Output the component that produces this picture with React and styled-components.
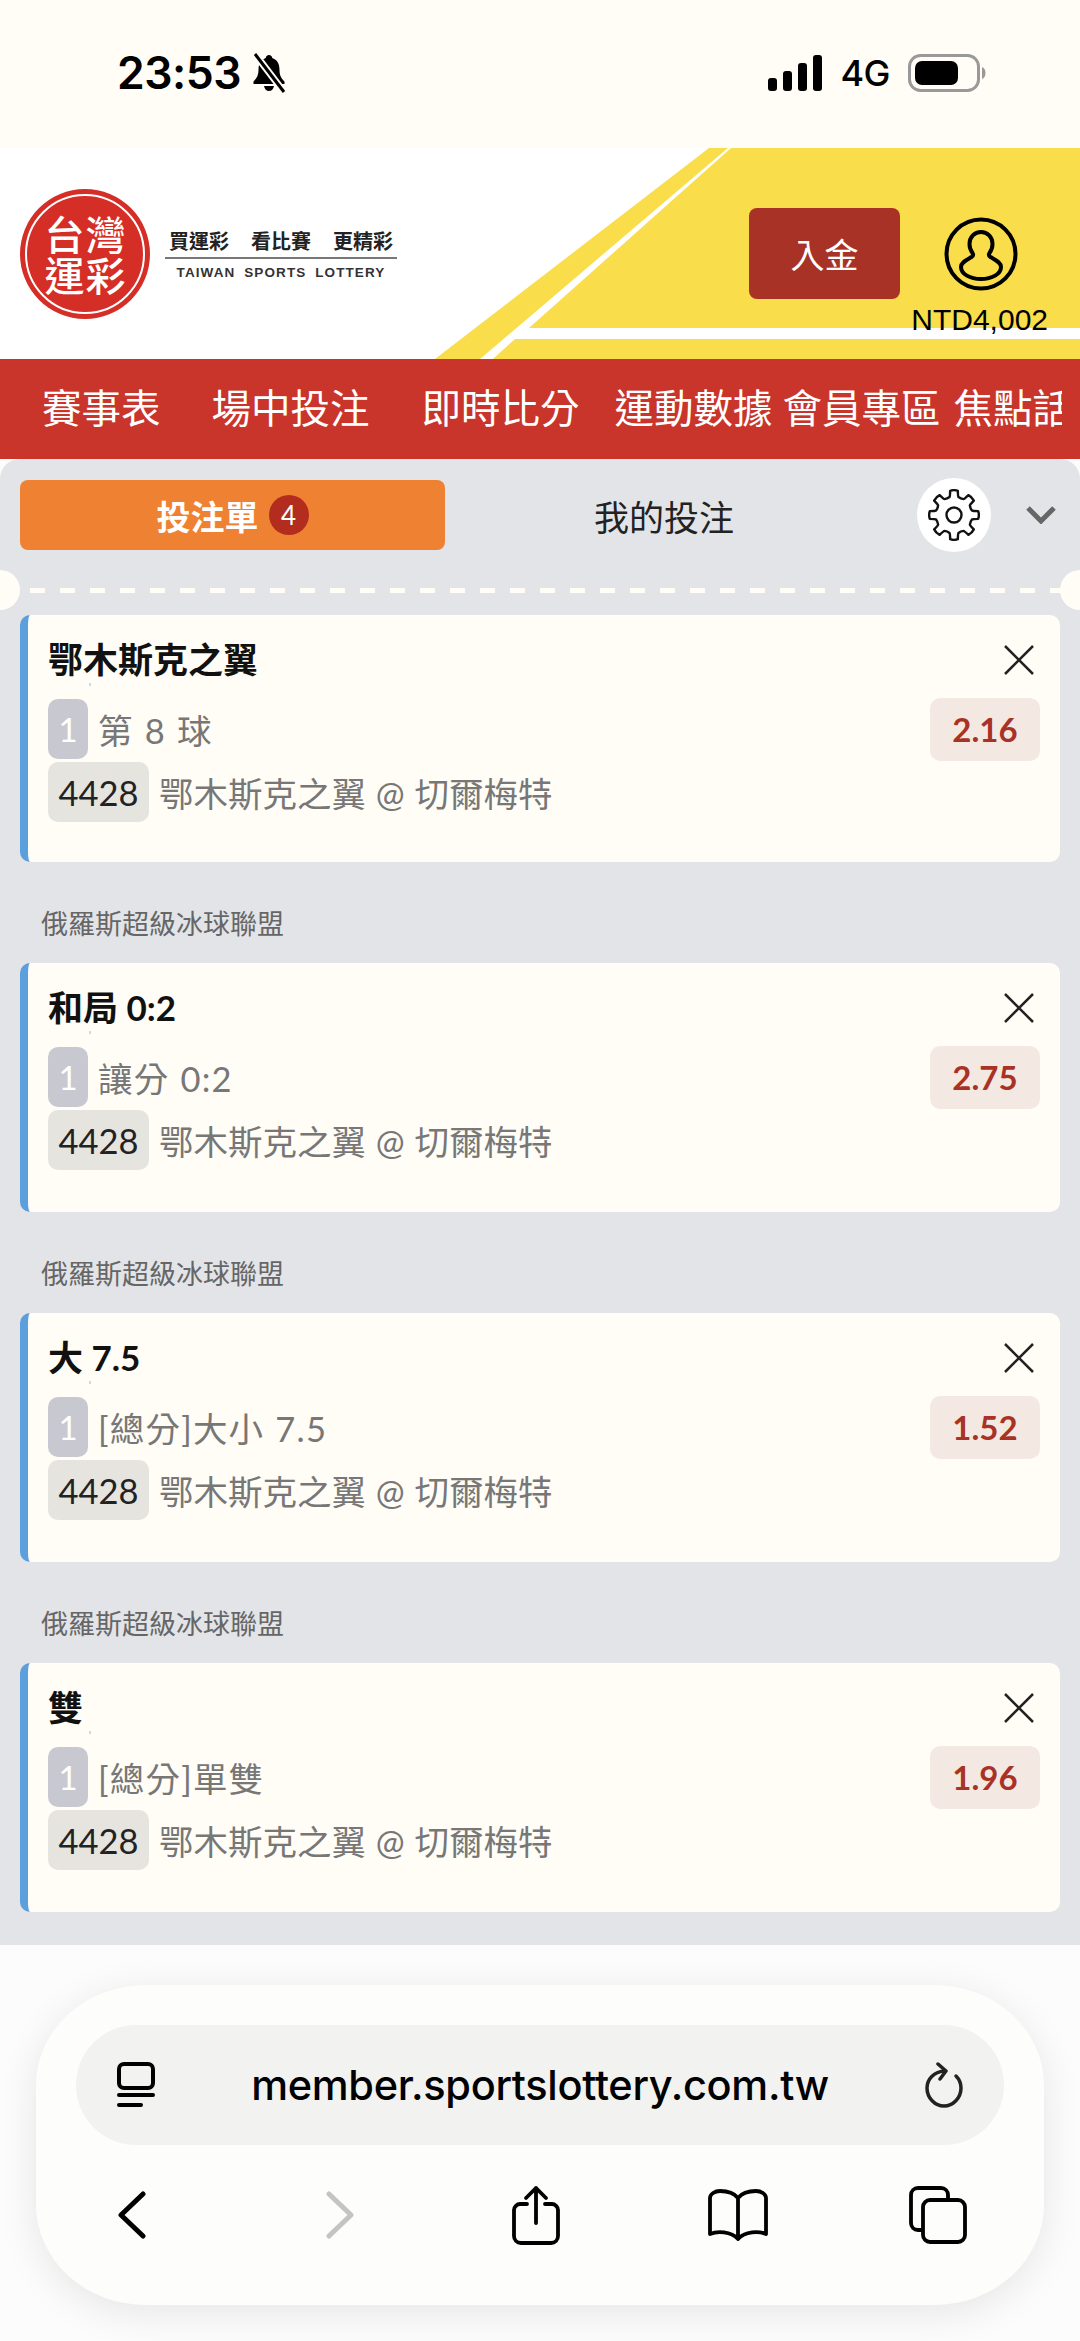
import React from 'react';
import styled, { createGlobalStyle } from 'styled-components';

const Global = createGlobalStyle`
  html, body { margin: 0; padding: 0; background: #fcfcfc; }
  * { box-sizing: border-box; }
  body { font-family: Lato, "Noto Sans CJK TC", sans-serif; }
`;

const Page = styled.div`
  width: 1080px;
  height: 2341px;
  overflow: hidden;
  background: #fcfcfc;
`;

/* status bar */
const StatusBar = styled.div`
  height: 148px;
  background: #fffdf6;
  display: flex;
  align-items: center;
  justify-content: space-between;
  padding: 0 94px 0 117px;
`;
const StatusSide = styled.div`
  display: flex;
  align-items: center;
  gap: ${p => p.$gap}px;
  height: 50px;
  margin-top: -2px;
`;
const Time = styled.span`
  font: 600 44.5px Inter, sans-serif;
  color: #000;
  letter-spacing: -0.5px;
`;
const Net = styled.span`
  font: 500 36px Inter, sans-serif;
  letter-spacing: -0.5px;
  color: #000;
`;

/* header */
const Header = styled.div`
  position: relative;
  height: 211px;
  background: #fff;
  display: flex;
  align-items: center;
  padding: 0 20px;
`;
const HeaderArt = styled.svg`
  position: absolute;
  left: 0;
  top: 0;
`;
const Logo = styled.div`
  position: relative;
  width: 130px;
  height: 130px;
  border-radius: 50%;
  background: #d42e27;
  display: grid;
  grid-template-columns: 41px 41px;
  grid-template-rows: 41px 41px;
  place-content: center;
  place-items: center;
  color: #fff;
  font: 500 40px "Noto Sans CJK TC", sans-serif;
  line-height: 41px;
  flex: none;
  &::after {
    content: '';
    position: absolute;
    inset: 5px;
    border: 2px solid #fff;
    border-radius: 50%;
  }
`;
const Tagline = styled.div`
  position: relative;
  margin-left: 15px;
  width: 232px;
  display: flex;
  flex-direction: column;
  align-items: center;
  margin-top: 4px;
`;
const Slogan = styled.div`
  font: 700 20px "Noto Sans CJK TC", sans-serif;
  line-height: 26px;
  color: #222;
  width: 100%;
  padding: 0 4px;
  display: flex;
  justify-content: space-between;
`;
const Rule = styled.div`
  width: 100%;
  height: 2px;
  background: #777;
  margin: 3px 0 4px;
`;
const English = styled.div`
  font: 700 13.5px "Liberation Sans", sans-serif;
  line-height: 20px;
  letter-spacing: 1.1px;
  word-spacing: 4px;
  color: #333;
  white-space: nowrap;
`;
const HeaderRight = styled.div`
  position: relative;
  margin-left: auto;
  display: flex;
  align-items: center;
  gap: 44px;
  margin-right: 42px;
`;
const Deposit = styled.button`
  width: 151px;
  height: 91px;
  border: 0;
  border-radius: 8px;
  background: #a93226;
  color: #fff;
  font: 400 34px "Noto Sans CJK TC", sans-serif;
`;
const Balance = styled.span`
  position: absolute;
  right: -30px;
  top: 95px;
  font: 400 30px "Liberation Sans", sans-serif;
  color: #000;
  white-space: nowrap;
`;

/* nav */
const Nav = styled.nav`
  height: 100px;
  background: #c9352b;
  padding: 0 18px 8px 42px;
`;
const NavList = styled.div`
  height: 100%;
  display: flex;
  align-items: center;
  overflow: hidden;
  white-space: nowrap;
`;
const NavItem = styled.span`
  flex: none;
  color: #fff;
  font: 400 39.5px "Noto Sans CJK TC", sans-serif;
  margin-right: ${p => p.$gap}px;
`;

/* bet panel */
const Panel = styled.div`
  height: 1486px;
  background: #e3e4e7;
  border-radius: 20px 20px 0 0;
  padding: 21px 20px 0;
`;
const Tabs = styled.div`
  height: 70px;
  display: flex;
  align-items: center;
`;
const ActiveTab = styled.div`
  width: 425px;
  height: 70px;
  border-radius: 8px;
  background: #ef8132;
  color: #fff;
  font: 700 34px "Noto Sans CJK TC", sans-serif;
  display: flex;
  align-items: center;
  justify-content: center;
  gap: 10px;
`;
const Count = styled.span`
  width: 40px;
  height: 40px;
  border-radius: 50%;
  background: #b32d1f;
  color: #fff;
  font: 400 26px Lato, sans-serif;
  display: flex;
  align-items: center;
  justify-content: center;
`;
const Tab = styled.div`
  width: 438px;
  text-align: center;
  color: #222;
  font: 400 35px "Noto Sans CJK TC", sans-serif;
`;
const GearWrap = styled.div`
  width: 74px;
  height: 74px;
  margin-left: 34px;
  border-radius: 50%;
  background: #fff;
  display: flex;
  align-items: center;
  justify-content: center;
  flex: none;
`;
const Chevron = styled.svg`
  margin-left: 35px;
  flex: none;
`;
const Divider = styled.div`
  position: relative;
  height: 5px;
  margin: 38px -20px 22px;
  background-image: repeating-linear-gradient(90deg, #fffdf6 0 15px, transparent 15px 30px);
  &::before, &::after {
    content: '';
    position: absolute;
    top: -18px;
    width: 40px;
    height: 40px;
    border-radius: 50%;
    background: #fffdf6;
  }
  &::before { left: -20px; }
  &::after { right: -20px; }
`;
const League = styled.div`
  height: 101px;
  padding: 41px 0 0 21px;
  font: 400 27px/40px "Noto Sans CJK TC", sans-serif;
  color: #666;
`;
const Card = styled.div`
  position: relative;
  height: ${p => p.$h}px;
  background: #fffdf6;
  border-left: 8px solid #5b9fdc;
  border-radius: 10px;
  padding: 20px 20px 0 20px;
`;
const Speck = styled.i`
  position: absolute;
  left: 61px;
  top: 68px;
  width: 2px;
  height: 3px;
  background: #c5dcf0;
`;
const CardTop = styled.div`
  display: flex;
  align-items: center;
  justify-content: space-between;
  height: 50px;
  margin-bottom: 14px;
  padding-right: 5px;
`;
const Title = styled.div`
  font: 700 35px Lato, "Noto Sans CJK TC", sans-serif;
  color: #111;
  padding-bottom: 5px;
`;
const Row = styled.div`
  display: flex;
  align-items: center;
  gap: 10px;
  height: 60px;
  margin-bottom: 3px;
  color: #777;
  font: 400 34.5px Lato, "Noto Sans CJK TC", sans-serif;
  word-spacing: 1px;
  white-space: nowrap;
`;
const Market = styled.span`
  letter-spacing: 1.2px;
`;
const Seq = styled.span`
  width: 40px;
  height: 60px;
  border-radius: 10px;
  background: #c8c8d0;
  color: #fff;
  font-size: 33px;
  display: flex;
  align-items: center;
  justify-content: center;
`;
const Code = styled.span`
  width: 101px;
  height: 60px;
  border-radius: 10px;
  background: #e6e4df;
  color: #222;
  font-size: 34.5px;
  display: flex;
  align-items: center;
  justify-content: center;
`;
const Odds = styled.span`
  margin-left: auto;
  width: 110px;
  height: 63px;
  border-radius: 10px;
  background: #f4e9e2;
  color: #a93226;
  font: 700 33px Lato, sans-serif;
  display: flex;
  align-items: center;
  justify-content: center;
`;

/* safari toolbar */
const Browser = styled.div`
  height: 396px;
  padding: 40px 36px 0;
  background: #fcfcfc;
`;
const BrowserCard = styled.div`
  height: 320px;
  border-radius: 110px / 100px;
  background: #fdfdfc;
  box-shadow: 0 8px 40px rgba(0, 0, 0, 0.09);
  padding: 40px 0 0;
`;
const UrlBar = styled.div`
  height: 120px;
  margin: 0 40px;
  border-radius: 60px;
  background: #f2f2f1;
  display: flex;
  align-items: center;
  justify-content: space-between;
  padding: 0 41px;
`;
const Url = styled.span`
  font: 500 41.5px Inter, sans-serif;
  letter-spacing: -0.3px;
  color: #000;
`;
const ToolRow = styled.div`
  display: flex;
  align-items: center;
  height: 60px;
  margin-top: 40px;
`;
const ToolSlot = styled.div`
  display: flex;
  margin-left: ${p => p.$ml}px;
`;

const Bell = () => (
  <svg width="36" height="40" viewBox="0 0 36 40">
    <path d="M18 2c-2 0-3 1.400-3.300 3C9 7 7.500 12 7.500 17c0 5-1.500 8-5 11.500V31h31v-2.500c-3.500-3.500-5-6.500-5-11.500 0-5-1.500-10-7.200-12C21 3.400 20 2 18 2zM13 33c.5 3 2.500 5 5 5s4.500-2 5-5z" fill="#000" />
    <path d="M4 1l29 38" stroke="#fffdf6" strokeWidth="7" />
    <path d="M4 1l29 38" stroke="#000" strokeWidth="3" />
  </svg>
);

const Signal = () => (
  <svg width="54" height="36" viewBox="0 0 54 36">
    <rect x="0" y="23" width="9" height="13" rx="3" />
    <rect x="15" y="16" width="9" height="20" rx="3" />
    <rect x="30" y="8" width="9" height="28" rx="3" />
    <rect x="45" y="0" width="9" height="36" rx="3" />
  </svg>
);

const Battery = () => (
  <svg width="78" height="38" viewBox="0 0 78 38">
    <rect x="1.500" y="1.500" width="69" height="35" rx="11" fill="none" stroke="#999" strokeWidth="3" />
    <rect x="7" y="7" width="43" height="24" rx="7" fill="#000" />
    <path d="M74 13c2.500 1 3.500 3 3.500 6s-1 5-3.500 6z" fill="#999" />
  </svg>
);

const UserIcon = () => (
  <svg width="74" height="74" viewBox="0 0 74 74" fill="none" stroke="#000" strokeWidth="4">
    <circle cx="37" cy="37" r="34.500" />
    <path d="M37 15c-6.500 0-11.500 5-11.500 12 0 4 1.500 7 3 9 1 1.500.5 3-1 4-4 2.500-10.500 5-10.500 10 0 7 9 12 20 12s20-5 20-12c0-5-6.500-7.500-10.500-10-1.500-1-2-2.500-1-4 1.500-2 3-5 3-9 0-7-5-12-11.500-12z" />
  </svg>
);

// eight rounded teeth, one pointing straight up
const gearPath = (() => {
  const pt = (r, deg) => {
    const a = (deg - 90) * Math.PI / 180;
    return `${(26 + r * Math.cos(a)).toFixed(2)} ${(26 + r * Math.sin(a)).toFixed(2)}`;
  };
  let d = `M${pt(18.5, -14)}`;
  for (let i = 0; i < 8; i++) {
    const c = i * 45;
    d += ` Q${pt(19, c - 12)} ${pt(24.5, c - 9)} Q${pt(25.5, c)} ${pt(24.5, c + 9)} Q${pt(19, c + 12)} ${pt(18.5, c + 14)}`;
    d += ` Q${pt(17.5, c + 22.5)} ${pt(18.5, c + 31)}`;
  }
  return d + 'Z';
})();

const Gear = () => (
  <svg width="52" height="52" viewBox="0 0 52 52" fill="none" stroke="#111" strokeWidth="2.400" strokeLinejoin="round">
    <circle cx="26" cy="26" r="7.500" />
    <path d={gearPath} />
  </svg>
);

const Close = () => (
  <svg width="32" height="32" viewBox="0 0 32 32" stroke="#222" strokeWidth="2.500">
    <path d="M2 2l28 28M30 2L2 30" />
  </svg>
);

const PageIcon = () => (
  <svg width="38" height="46" viewBox="0 0 38 46" fill="none" stroke="#000" strokeWidth="4" strokeLinecap="round">
    <rect x="2" y="2" width="34" height="24" rx="5" />
    <path d="M2 33h34M2 43h22" />
  </svg>
);

const Reload = () => (
  <svg width="38" height="46" viewBox="0 0 38 46" fill="none" stroke="#222" strokeWidth="3.500" strokeLinecap="round" strokeLinejoin="round">
    <path d="M19 9C9 10 2 17 2 26c0 10 8 18 17 18s17-8 17-18c0-5-2-9-5-12" />
    <path d="M13 2l8 7-6 8" />
  </svg>
);

const Back = ({ color = '#000', flip }) => (
  <svg width="30" height="48" viewBox="0 0 30 48" fill="none" stroke={color} strokeWidth="5" strokeLinecap="round" strokeLinejoin="round"
    transform={flip ? 'scale(-1 1)' : undefined}>
    <path d="M26 3L4 24l22 21" />
  </svg>
);

const Share = () => (
  <svg width="48" height="60" viewBox="0 0 48 60" fill="none" stroke="#000" strokeWidth="3.800" strokeLinecap="round" strokeLinejoin="round">
    <path d="M15 19H8c-3 0-6 3-6 6v26c0 4 3 7 7 7h30c4 0 7-3 7-7V25c0-3-3-6-6-6h-7" />
    <path d="M24 38V3M14 13L24 3l10 10" />
  </svg>
);

const Book = () => (
  <svg width="60" height="52" viewBox="0 0 60 52" fill="none" stroke="#000" strokeWidth="3.800" strokeLinejoin="round">
    <path d="M30 9C26 4 20 2 12 2 7 2 2 5 2 9v36c7-3 21-3 28 5 7-8 21-8 28-5V9c0-4-5-7-10-7-8 0-14 2-18 7zM30 9v41" />
  </svg>
);

const TabsIcon = () => (
  <svg width="58" height="58" viewBox="0 0 58 58" fill="none" stroke="#000" strokeWidth="3.800" strokeLinejoin="round">
    <path d="M13 44H9c-4 0-7-3-7-7V9c0-4 3-7 7-7h23c4 0 7 3 7 7v4" />
    <rect x="14" y="14" width="42" height="42" rx="7" />
  </svg>
);

const bets = [
  { league: null, title: '鄂木斯克之翼', market: '第 8 球', odds: '2.16', h: 247 },
  { league: '俄羅斯超級冰球聯盟', title: '和局 0:2', market: '讓分 0:2', odds: '2.75', h: 249 },
  { league: '俄羅斯超級冰球聯盟', title: '大 7.5', market: '[總分]大小 7.5', odds: '1.52', h: 249 },
  { league: '俄羅斯超級冰球聯盟', title: '雙', market: '[總分]單雙', odds: '1.96', h: 249 },
];

const navItems = [
  ['賽事表', 51], ['場中投注', 52], ['即時比分', 35], ['運動數據', 10], ['會員專區', 13], ['焦點話題', 0],
];

const App = () => (
  <Page>
    <Global />
    <StatusBar>
      <StatusSide $gap={10}>
        <Time>23:53</Time>
        <Bell />
      </StatusSide>
      <StatusSide $gap={18}>
        <Signal />
        <Net>4G</Net>
        <Battery />
      </StatusSide>
    </StatusBar>

    <Header>
      <HeaderArt width="1080" height="211" viewBox="0 0 1080 211">
        <path d="M709 0h19L480 211h-45z" fill="#f9dd4a" />
        <path d="M731 0h349v180H529z" fill="#f9dd4a" />
        <path d="M515 191h565v20H493z" fill="#f9dd4a" />
      </HeaderArt>
      <Logo>
        <span>台</span><span>灣</span><span>運</span><span>彩</span>
      </Logo>
      <Tagline>
        <Slogan><span>買運彩</span><span>看比賽</span><span>更精彩</span></Slogan>
        <Rule />
        <English>TAIWAN SPORTS LOTTERY</English>
      </Tagline>
      <HeaderRight>
        <Deposit>入金</Deposit>
        <UserIcon />
        <Balance>NTD4,002</Balance>
      </HeaderRight>
    </Header>

    <Nav>
      <NavList>
        {navItems.map(([label, gap]) => (
          <NavItem key={label} $gap={gap}>{label}</NavItem>
        ))}
      </NavList>
    </Nav>

    <Panel>
      <Tabs>
        <ActiveTab>投注單<Count>4</Count></ActiveTab>
        <Tab>我的投注</Tab>
        <GearWrap><Gear /></GearWrap>
        <Chevron width="30" height="18" viewBox="0 0 30 18" fill="none" stroke="#666" strokeWidth="5">
          <path d="M2 2l13 13L28 2" />
        </Chevron>
      </Tabs>
      <Divider />
      {bets.map(b => (
        <React.Fragment key={b.title}>
          {b.league && <League>{b.league}</League>}
          <Card $h={b.h}>
            <Speck />
            <CardTop>
              <Title>{b.title}</Title>
              <Close />
            </CardTop>
            <Row>
              <Seq>1</Seq>
              <Market>{b.market}</Market>
              <Odds>{b.odds}</Odds>
            </Row>
            <Row>
              <Code>4428</Code>
              <span>鄂木斯克之翼 @ 切爾梅特</span>
            </Row>
          </Card>
        </React.Fragment>
      ))}
    </Panel>

    <Browser>
      <BrowserCard>
        <UrlBar>
          <PageIcon />
          <Url>member.sportslottery.com.tw</Url>
          <Reload />
        </UrlBar>
        <ToolRow>
          <ToolSlot $ml={81}><Back /></ToolSlot>
          <ToolSlot $ml={178}><Back color="#c4c4c4" flip /></ToolSlot>
          <ToolSlot $ml={157}><Share /></ToolSlot>
          <ToolSlot $ml={148}><Book /></ToolSlot>
          <ToolSlot $ml={141}><TabsIcon /></ToolSlot>
        </ToolRow>
      </BrowserCard>
    </Browser>
  </Page>
);

export default App;
